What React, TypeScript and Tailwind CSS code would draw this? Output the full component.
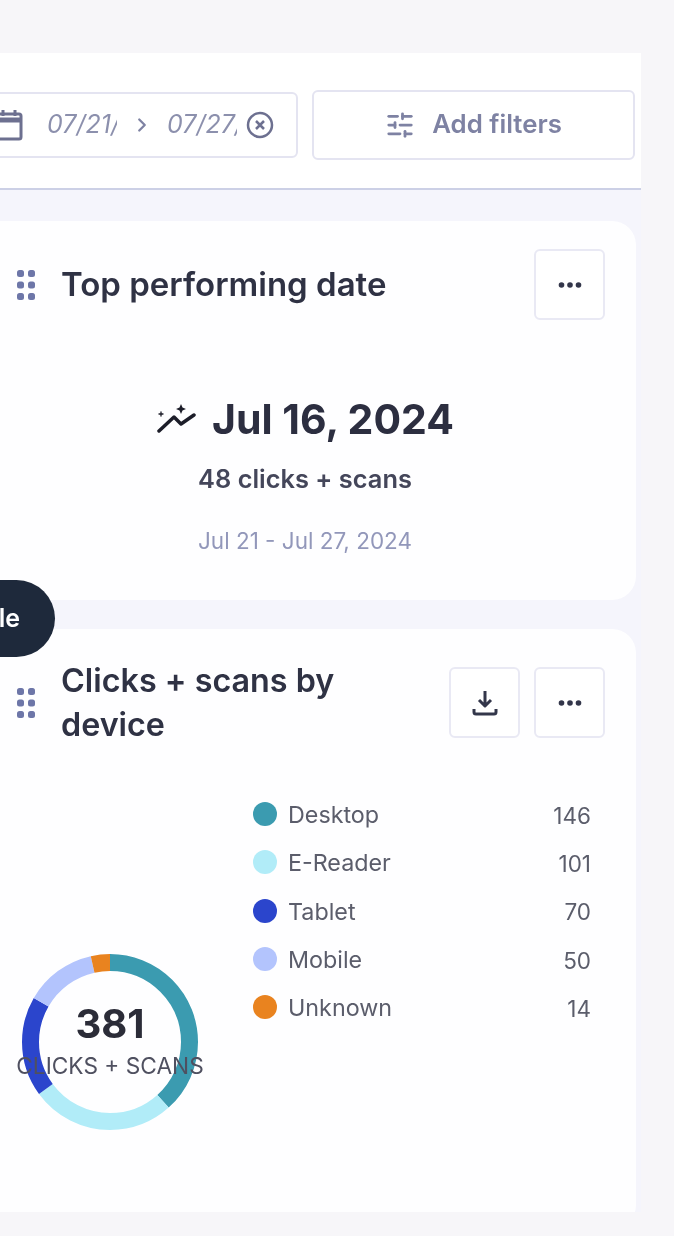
import { SlidersHorizontal, ChevronRight } from 'lucide-react';

const font = { fontFamily: 'Inter, "Noto Sans", sans-serif' };

const legend = [
  { label: 'Desktop', value: 146, dot: 'bg-[#3b9bb0]' },
  { label: 'E-Reader', value: 101, dot: 'bg-[#b1ecf8]' },
  { label: 'Tablet', value: 70, dot: 'bg-[#2b45cc]' },
  { label: 'Mobile', value: 50, dot: 'bg-[#b3c4fd]' },
  { label: 'Unknown', value: 14, dot: 'bg-[#e9831f]' },
];

const segments = [
  { value: 146, color: '#3b9bb0' },
  { value: 101, color: '#b1ecf8' },
  { value: 70, color: '#2b45cc' },
  { value: 50, color: '#b3c4fd' },
  { value: 14, color: '#e9831f' },
];

function Grip() {
  return (
    <svg width="18" height="30" viewBox="0 0 18 30" fill="#6d76a8" className="shrink-0">
      <rect x="0" y="0" width="7" height="7" rx="2.500" />
      <rect x="11" y="0" width="7" height="7" rx="2.500" />
      <rect x="0" y="11.500" width="7" height="7" rx="2.500" />
      <rect x="11" y="11.500" width="7" height="7" rx="2.500" />
      <rect x="0" y="23" width="7" height="7" rx="2.500" />
      <rect x="11" y="23" width="7" height="7" rx="2.500" />
    </svg>
  );
}

function IconButton({ children }: { children: React.ReactNode }) {
  return (
    <button className="w-[71px] h-[71px] rounded-[6px] border-2 border-[#e9e9f4] bg-white flex items-center justify-center shrink-0">
      {children}
    </button>
  );
}

function Dots() {
  return (
    <svg width="24" height="8" viewBox="0 0 24 8" fill="#33364a">
      <circle cx="3.500" cy="4" r="2.800" />
      <circle cx="12" cy="4" r="2.800" />
      <circle cx="20.500" cy="4" r="2.800" />
    </svg>
  );
}

function Donut() {
  const r = 79.5;
  const total = 381;
  const circ = 2 * Math.PI * r;
  let used = 0;
  return (
    <div className="relative w-[176px] h-[176px] ml-[5px] mt-[207px] shrink-0">
      <svg width="176" height="176" viewBox="0 0 176 176" className="-rotate-90">
        {segments.map((s) => {
          const len = (s.value / total) * circ;
          const el = (
            <circle
              key={s.color}
              cx="88"
              cy="88"
              r={r}
              fill="none"
              stroke={s.color}
              strokeWidth="17"
              strokeDasharray={`${len} ${circ - len}`}
              strokeDashoffset={-used}
            />
          );
          used += len;
          return el;
        })}
      </svg>
      <div className="absolute inset-0 flex flex-col items-center">
        <div className="mt-[47px] text-[40px] leading-[46px] font-bold text-[#2b2c38]">381</div>
        <div className="mt-[5px] text-[22.700px] leading-[28px] whitespace-nowrap text-[#4f5060]">CLICKS + SCANS</div>
      </div>
    </div>
  );
}

export default function App() {
  return (
    <div style={font} className="relative w-[674px] h-[1236px] overflow-hidden bg-[#f7f6f9] pt-[53px] blur-[0.6px]">
      <div className="w-[641px] h-[1159px] bg-[#f5f5fc] overflow-hidden">
        {/* filter bar */}
        <div className="h-[137px] bg-white border-b-2 border-[#ccd0e6] pt-[37px] pr-[6px] flex justify-end gap-[14px]">
          <div className="w-[340px] h-[66px] mt-[2px] rounded-[6px] border-2 border-[#e4e4f1] flex items-center pl-[35px] text-[#8c90ad] text-[25px] italic shrink-0">
            <svg width="28" height="32" viewBox="0 0 28 32" fill="none" stroke="#6d7090" strokeWidth="3" className="shrink-0">
              <rect x="2" y="5" width="24" height="25" rx="2" />
              <path d="M2 11h24" strokeWidth="5" />
              <path d="M8 1v6M20 1v6" />
            </svg>
            <span className="ml-[24px] w-[70px] overflow-hidden whitespace-nowrap">07/21/2024</span>
            <ChevronRight size={22} strokeWidth={2.5} className="ml-[14px] shrink-0 text-[#7e82a3]" />
            <span className="ml-[14px] w-[70px] overflow-hidden whitespace-nowrap">07/27/2024</span>
            <svg width="28" height="28" viewBox="0 0 28 28" fill="none" stroke="#6d7090" strokeWidth="2.500" className="ml-[9px] shrink-0">
              <circle cx="14" cy="14" r="12" />
              <path d="M10 10l8 8M18 10l-8 8" />
            </svg>
          </div>
          <button className="w-[323px] h-[70px] rounded-[6px] border-2 border-[#e4e4f1] flex items-center justify-center gap-[17px] text-[#7e82a3] text-[25.800px] font-semibold shrink-0">
            <SlidersHorizontal size={30} strokeWidth={2.2} />
            <span className="pb-[2px]">Add filters</span>
          </button>
        </div>

        {/* cards */}
        <div className="pt-[31px] pr-[5px] -ml-[26px] flex flex-col gap-[29px]">
          <div className="h-[379px] bg-[#fefeff] rounded-[24px] pt-[28px] pl-[43px] pr-[31px]">
            <div className="flex items-center">
              <Grip />
              <h2 className="ml-[26px] flex-1 pb-[2px] text-[33px] leading-[44px] font-semibold text-[#2f3244]">Top performing date</h2>
              <IconButton><Dots /></IconButton>
            </div>
            <div className="-ml-[12px] flex flex-col items-center mt-[76px]">
              <div className="flex items-center gap-[16px]">
                <svg width="40" height="31" viewBox="0 0 40 31" fill="none" stroke="#1c1d29" strokeWidth="3.500" strokeLinecap="round" strokeLinejoin="round">
                  <path d="M3 27l15-14 7 7 13-9" />
                  <path d="M25 0l1.500 3.500 3.500 1.500-3.500 1.500-1.500 3.500-1.500-3.500-3.500-1.500 3.500-1.500z" fill="#1c1d29" stroke="none" />
                  <path d="M5 8v4M3 10h4" strokeWidth="1.300" />
                </svg>
                <span className="text-[41px] leading-[46px] font-bold text-[#2c2e40]">Jul 16, 2024</span>
              </div>
              <div className="mt-[21px] text-[25.400px] leading-[32px] font-semibold text-[#44465a]">48 clicks + scans</div>
              <div className="mt-[30px] text-[22.500px] leading-[32px] text-[#9297ba]">Jul 21 - Jul 27, 2024</div>
            </div>
          </div>

          <div className="h-[600px] bg-[#fefeff] rounded-[24px] pt-[29px] pl-[43px] pr-[31px]">
            <div className="flex items-center gap-[14px]">
              <Grip />
              <h2 className="ml-[12px] w-[340px] flex-1 pt-[1px] text-[32.300px] leading-[44px] font-semibold text-[#2f3244]">Clicks + scans by<br />device</h2>
              <IconButton>
                <svg width="28" height="28" viewBox="0 0 28 28" fill="none" stroke="#33364a" strokeWidth="3" strokeLinejoin="round">
                  <path d="M14 2v15M8 11l6 6 6-6" />
                  <path d="M3 20v3a2 2 0 0 0 2 2h18a2 2 0 0 0 2-2v-3" />
                </svg>
              </IconButton>
              <IconButton><Dots /></IconButton>
            </div>
            <div className="flex">
              <Donut />
              <div className="ml-[55px] mt-[43px] w-[338px] -mr-[14px] shrink-0">
                {legend.map((l) => (
                  <div key={l.label} className="h-[48.300px] flex items-center text-[#5b5d6b]">
                    <span className={`w-[24px] h-[24px] rounded-full shrink-0 ${l.dot}`} />
                    <span className="ml-[11px] flex-1 pt-[3px] text-[23.300px]">{l.label}</span>
                    <span className="pt-[3px] text-[22.500px]">{l.value}</span>
                  </div>
                ))}
              </div>
            </div>
          </div>
        </div>
      </div>

      {/* floating pill, mostly off screen */}
      <div className="absolute left-[-200px] top-[580px] w-[255px] h-[77px] rounded-full bg-[#1e293b] flex items-center justify-end pr-[35px] text-white text-[25px] font-semibold">
        Toggle
      </div>
    </div>
  );
}
